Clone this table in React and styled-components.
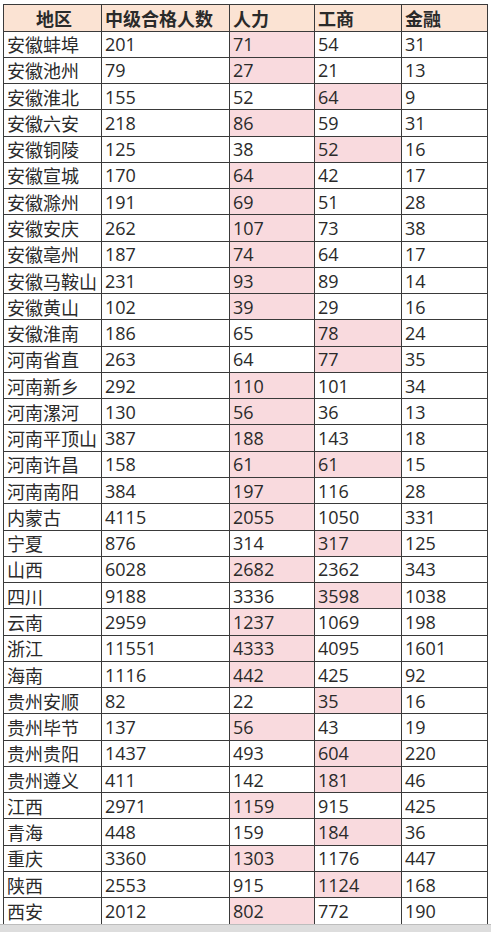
import React from 'react';
import styled, { createGlobalStyle } from 'styled-components';

const Global = createGlobalStyle`
  html, body { margin: 0; padding: 0; background: #ffffff; }
  body { font-family: "Open Sans", "Noto Sans CJK SC", sans-serif; }
`;

const Page = styled.div`
  width: 491px;
  height: 932px;
  display: flex;
  flex-direction: column;
  overflow: hidden;
`;

const Sheet = styled.div`
  padding: 4px 4px 0 3px;
  flex: 1 1 auto;
  min-height: 0;
  overflow: hidden;
`;

const Table = styled.table`
  border-collapse: collapse;
  width: 484px;
  table-layout: fixed;
  color: #2a2a2a;
  font-size: 18px;
  font-family: "Open Sans", "Noto Sans CJK SC", sans-serif;
`;

const Head = styled.th`
  background: #fbe3d3;
  border: 1.5px solid #3a3a3a;
  height: 25.5px;
  padding: 0 0 0 3px;
  font-weight: 700;
  text-align: ${p => (p.$center ? 'center' : 'left')};
  line-height: 1;
  font-family: "Noto Sans CJK SC", sans-serif;
`;

const Cell = styled.td`
  border: 1.5px solid #3a3a3a;
  height: 25.27px;
  padding: 0 0 0 3px;
  line-height: 1;
  white-space: nowrap;
  overflow: hidden;
  background: ${p => (p.$hot ? '#f9dade' : '#ffffff')};
  font-family: ${p => (p.$cjk ? '"Noto Sans CJK SC", sans-serif' : '"Open Sans", sans-serif')};
`;

const Footer = styled.div`
  flex: 0 0 7px;
  background: #dddddd;
  border-top: 1px solid #bdbdbd;
`;

const rows = [
  ['安徽蚌埠', 201, 71, 54, 31, 'r'],
  ['安徽池州', 79, 27, 21, 13, 'r'],
  ['安徽淮北', 155, 52, 64, 9, 'g'],
  ['安徽六安', 218, 86, 59, 31, 'r'],
  ['安徽铜陵', 125, 38, 52, 16, 'g'],
  ['安徽宣城', 170, 64, 42, 17, 'r'],
  ['安徽滁州', 191, 69, 51, 28, 'r'],
  ['安徽安庆', 262, 107, 73, 38, 'r'],
  ['安徽亳州', 187, 74, 64, 17, 'r'],
  ['安徽马鞍山', 231, 93, 89, 14, 'r'],
  ['安徽黄山', 102, 39, 29, 16, 'r'],
  ['安徽淮南', 186, 65, 78, 24, 'g'],
  ['河南省直', 263, 64, 77, 35, 'g'],
  ['河南新乡', 292, 110, 101, 34, 'r'],
  ['河南漯河', 130, 56, 36, 13, 'r'],
  ['河南平顶山', 387, 188, 143, 18, 'r'],
  ['河南许昌', 158, 61, 61, 15, 'rg'],
  ['河南南阳', 384, 197, 116, 28, 'r'],
  ['内蒙古', 4115, 2055, 1050, 331, 'r'],
  ['宁夏', 876, 314, 317, 125, 'g'],
  ['山西', 6028, 2682, 2362, 343, 'r'],
  ['四川', 9188, 3336, 3598, 1038, 'g'],
  ['云南', 2959, 1237, 1069, 198, 'r'],
  ['浙江', 11551, 4333, 4095, 1601, 'r'],
  ['海南', 1116, 442, 425, 92, 'r'],
  ['贵州安顺', 82, 22, 35, 16, 'g'],
  ['贵州毕节', 137, 56, 43, 19, 'r'],
  ['贵州贵阳', 1437, 493, 604, 220, 'g'],
  ['贵州遵义', 411, 142, 181, 46, 'g'],
  ['江西', 2971, 1159, 915, 425, 'r'],
  ['青海', 448, 159, 184, 36, 'g'],
  ['重庆', 3360, 1303, 1176, 447, 'r'],
  ['陕西', 2553, 915, 1124, 168, 'g'],
  ['西安', 2012, 802, 772, 190, 'r'],
];

export default function App() {
  return (
    <Page>
      <Global />
      <Sheet>
        <Table>
          <colgroup>
            <col style={{ width: 98 }} />
            <col style={{ width: 128 }} />
            <col style={{ width: 85 }} />
            <col style={{ width: 87 }} />
            <col style={{ width: 86 }} />
          </colgroup>
          <thead>
            <tr>
              <Head $center>地区</Head>
              <Head>中级合格人数</Head>
              <Head>人力</Head>
              <Head>工商</Head>
              <Head>金融</Head>
            </tr>
          </thead>
          <tbody>
            {rows.map(([area, total, hr, biz, fin, hot]) => (
              <tr key={area}>
                <Cell $cjk>{area}</Cell>
                <Cell>{total}</Cell>
                <Cell $hot={hot.includes('r')}>{hr}</Cell>
                <Cell $hot={hot.includes('g')}>{biz}</Cell>
                <Cell>{fin}</Cell>
              </tr>
            ))}
          </tbody>
        </Table>
      </Sheet>
      <Footer />
    </Page>
  );
}
